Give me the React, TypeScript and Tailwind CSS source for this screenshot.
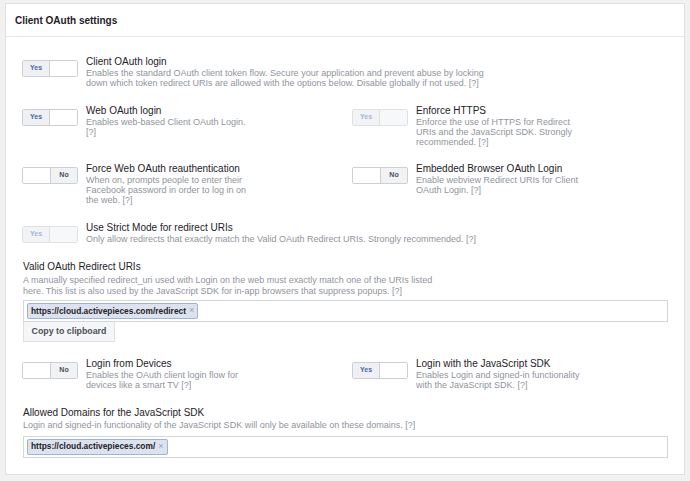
import React from "react";

type TogProps = { on: boolean; disabled?: boolean };

function Toggle({ on, disabled }: TogProps) {
  if (on) {
    return (
      <div
        className={`flex h-[17px] w-[56px] shrink-0 overflow-hidden rounded-[2px] border ${
          disabled ? "border-[#dfe1e5]" : "border-[#ccd0d5]"
        }`}
      >
        <div
          className={`flex w-[27px] items-center justify-center border-r text-[7px] font-bold ${
            disabled
              ? "border-[#dfe1e5] bg-[#f2f3f6] text-[#a3b5d6]"
              : "border-[#ccd0d5] bg-[#eef0f4] text-[#4b67a1]"
          }`}
        >
          Yes
        </div>
        <div className={`flex-1 ${disabled ? "bg-[#f7f8fa]" : "bg-white"}`} />
      </div>
    );
  }
  return (
    <div className="flex h-[17px] w-[56px] shrink-0 overflow-hidden rounded-[2px] border border-[#ccd0d5]">
      <div className="w-[28px] border-r border-[#ccd0d5] bg-white" />
      <div className="flex flex-1 items-center justify-center bg-[#f1f2f4] text-[7px] font-bold text-[#4b4f56]">
        No
      </div>
    </div>
  );
}

type OptProps = { on: boolean; disabled?: boolean; title: string; lines: string[] };

function Option({ on, disabled, title, lines }: OptProps) {
  return (
    <div className="flex items-start">
      <div className="mt-[4px]">
        <Toggle on={on} disabled={disabled} />
      </div>
      <div className="ml-[8px]">
        <div className="text-[10px] leading-[12px] text-[#1d2129]">{title}</div>
        <div className="text-[9px] leading-[10px] text-[#90949c]">
          {lines.map((l, i) => (
            <div key={i} className="whitespace-nowrap">
              {l}
            </div>
          ))}
        </div>
      </div>
    </div>
  );
}

function Tag({ text }: { text: string }) {
  return (
    <div className="flex h-[16px] items-center rounded-[2px] border border-[#9cb4d8] bg-[#dde3ee] pl-[3px] pr-[3px] text-[8.4px] font-semibold text-[#1d2129]">
      <span>{text}</span>
      <span className="ml-[3px] text-[9px] font-normal text-[#9aa2b1]">×</span>
    </div>
  );
}

export default function App() {
  return (
    <div
      className="h-[481px] w-[690px] bg-[#f1f1f1] pl-[5px] pr-[5px] pt-[3px]"
      style={{ fontFamily: '"Liberation Sans", Arial, sans-serif' }}
    >
      <div className="flex h-[472px] flex-col border border-[#dfe0e4] bg-white">
        <div className="flex h-[33px] shrink-0 items-center border-b border-[#e5e6e9] pl-[9px] text-[10px] font-bold text-[#1d2129]">
          Client OAuth settings
        </div>
        <div className="flex flex-col pl-[16px] pr-[16px] pt-[19px]">
          <Option
            on
            title="Client OAuth login"
            lines={[
              "Enables the standard OAuth client token flow. Secure your application and prevent abuse by locking",
              "down which token redirect URIs are allowed with the options below. Disable globally if not used.  [?]",
            ]}
          />
          <div className="mt-[17px] grid grid-cols-[330px_1fr]">
            <Option on title="Web OAuth login" lines={["Enables web-based Client OAuth Login.", "[?]"]} />
            <Option
              on
              disabled
              title="Enforce HTTPS"
              lines={[
                "Enforce the use of HTTPS for Redirect",
                "URIs and the JavaScript SDK. Strongly",
                "recommended.  [?]",
              ]}
            />
          </div>
          <div className="mt-[16px] grid grid-cols-[330px_1fr]">
            <Option
              on={false}
              title="Force Web OAuth reauthentication"
              lines={[
                "When on, prompts people to enter their",
                "Facebook password in order to log in on",
                "the web.  [?]",
              ]}
            />
            <Option
              on={false}
              title="Embedded Browser OAuth Login"
              lines={["Enable webview Redirect URIs for Client", "OAuth Login.  [?]"]}
            />
          </div>
          <div className="mt-[17px]">
            <Option
              on
              disabled
              title="Use Strict Mode for redirect URIs"
              lines={[
                "Only allow redirects that exactly match the Valid OAuth Redirect URIs. Strongly recommended.  [?]",
              ]}
            />
          </div>
          <div className="mt-[17px] pl-[1px]">
            <div className="text-[10px] leading-[12px] text-[#1d2129]">Valid OAuth Redirect URIs</div>
            <div className="mt-[2px] text-[9px] leading-[10.5px] text-[#90949c]">
              <div className="whitespace-nowrap">
                A manually specified redirect_uri used with Login on the web must exactly match one of the URIs listed
              </div>
              <div className="whitespace-nowrap">
                here. This list is also used by the JavaScript SDK for in-app browsers that suppress popups.  [?]
              </div>
            </div>
            <div className="mt-[4px] flex h-[22px] w-[645px] items-center border border-[#d3d6db] bg-white pl-[3px]">
              <Tag text="https://cloud.activepieces.com/redirect" />
            </div>
            <div className="flex">
              <div className="flex h-[20px] w-[92px] items-center justify-center border-b border-l border-r border-[#dddfe2] bg-[#f5f6f7] text-[8.8px] font-bold text-[#4b4f56]">
                Copy to clipboard
              </div>
            </div>
          </div>
          <div className="mt-[16px] grid grid-cols-[330px_1fr]">
            <Option
              on={false}
              title="Login from Devices"
              lines={["Enables the OAuth client login flow for", "devices like a smart TV  [?]"]}
            />
            <Option
              on
              title="Login with the JavaScript SDK"
              lines={["Enables Login and signed-in functionality", "with the JavaScript SDK.  [?]"]}
            />
          </div>
          <div className="mt-[17px] pl-[1px]">
            <div className="text-[10px] leading-[12px] text-[#1d2129]">Allowed Domains for the JavaScript SDK</div>
            <div className="mt-[1px] whitespace-nowrap text-[9px] leading-[10.5px] text-[#90949c]">
              Login and signed-in functionality of the JavaScript SDK will only be available on these domains.  [?]
            </div>
            <div className="mt-[5px] flex h-[22px] w-[645px] items-center border border-[#d3d6db] bg-white pl-[3px]">
              <Tag text="https://cloud.activepieces.com/" />
            </div>
          </div>
        </div>
      </div>
    </div>
  );
}
